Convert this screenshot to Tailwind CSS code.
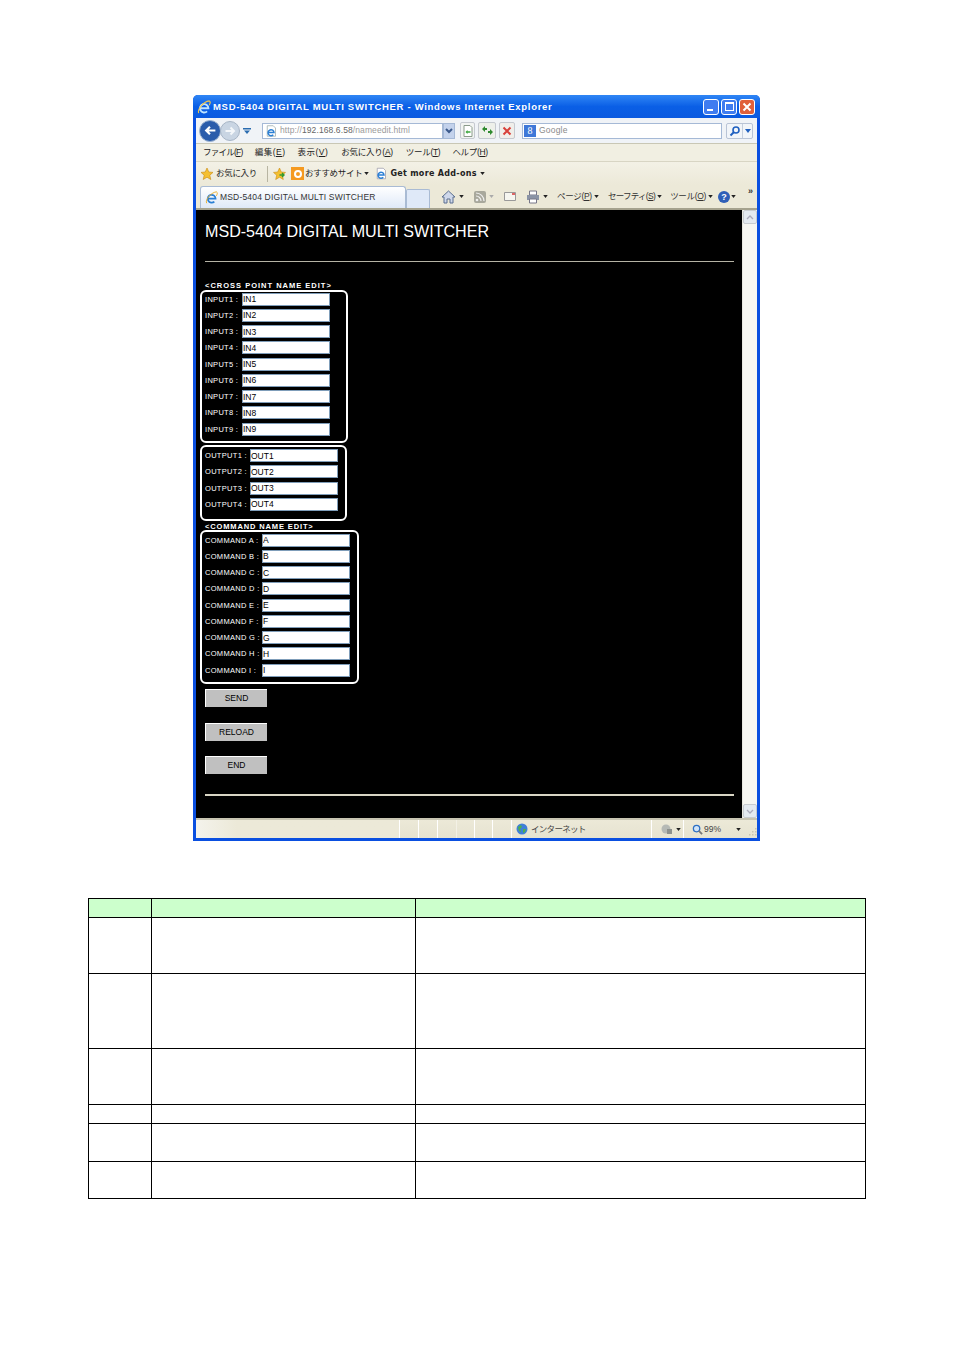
<!DOCTYPE html>
<html lang="en">

<head>
    <meta charset="UTF-8">
    <title>MSD-5404 DIGITAL MULTI SWITCHER</title>
    <script src="https://cdn.jsdelivr.net/npm/@tailwindcss/browser@4"></script>
</head>

<body class="bg-white font-['Liberation_Sans','Noto_Sans_CJK_JP',sans-serif]">
    <div class="w-[954px] h-[1350px] overflow-hidden pt-[95px]">

        <!-- IE window -->
        <div class="ml-[193px] w-[567px] h-[746px] flex flex-col bg-[#0a4fe0] rounded-t-[5px] px-[3px] pb-[3px]">

            <!-- Title bar -->
            <div class="h-[23px] -mx-[3px] px-[4px] flex items-center rounded-t-[5px] bg-gradient-to-b from-[#2f86f5] via-[#0a5fe6] to-[#0b5ae0]">
                <svg class="w-[14px] h-[14px]" viewBox="0 0 16 16"><path d="M4 9.500h9A4.800 4.800 0 1 0 11.500 13" fill="none" stroke="#bfe4ff" stroke-width="2.200"/><path d="M2 15C0 11 7 2 14 1c2 1 1 3 0 5" fill="none" stroke="#f3c74a" stroke-width="1.200"/></svg>
                <span class="ml-[2px] pt-[2px] text-[9.5px] font-bold tracking-[0.7px] text-white whitespace-nowrap">MSD-5404 DIGITAL MULTI SWITCHER - Windows Internet Explorer</span>
                <div class="ml-auto flex gap-[2px] pr-[1px]">
                    <div class="w-[16px] h-[16px] rounded-[3px] border border-white bg-[#3f7cf0] flex items-end pl-[3px] pb-[3px]"><div class="w-[6px] h-[2px] bg-white"></div></div>
                    <div class="w-[16px] h-[16px] rounded-[3px] border border-white bg-[#3f7cf0] flex items-center justify-center"><div class="w-[9px] h-[9px] border border-white border-t-2"></div></div>
                    <div class="w-[16px] h-[16px] rounded-[3px] border border-white bg-[#e0603a] flex items-center justify-center">
                        <svg class="w-[10px] h-[10px]" viewBox="0 0 10 10"><path d="M1.5 1.5l7 7M8.5 1.5l-7 7" stroke="#fff" stroke-width="2"/></svg>
                    </div>
                </div>
            </div>

            <!-- Address row -->
            <div class="h-[26px] flex items-center bg-[#f0f3f7] border-b border-[#c9c7b5] shrink-0 pl-[3px]">
                <div class="w-[22px] h-[22px] rounded-full bg-[#2a5cab] border border-[#9db3d0] flex items-center justify-center">
                    <svg class="w-[13px] h-[13px]" viewBox="0 0 12 12"><path d="M10.5 6H2M5.5 2.5L2 6l3.5 3.5" fill="none" stroke="#fff" stroke-width="2"/></svg>
                </div>
                <div class="-ml-[1px] w-[20px] h-[20px] rounded-full bg-[#c9d5e3] border border-[#a7b5c6] flex items-center justify-center">
                    <svg class="w-[12px] h-[12px]" viewBox="0 0 12 12"><path d="M1.5 6H10M6.5 2.5L10 6l-3.5 3.5" fill="none" stroke="#f4f7fa" stroke-width="2"/></svg>
                </div>
                <svg class="ml-[3px] w-[8px] h-[6px]" viewBox="0 0 8 6"><path d="M0 0h8v1.5H0zM1 2.5h6L4 6z" fill="#2a6cb0"/></svg>
                <div class="ml-[11px] w-[181px] h-[16px] bg-white border border-[#a5b9d6] flex items-center">
                    <svg class="w-[12px] h-[12px] ml-[2px] shrink-0" viewBox="0 0 16 16"><path d="M3 1h8l3 3v11H3z" fill="#fff" stroke="#9aa"/><path d="M4 10h8A4 4 0 1 0 11 13" fill="none" stroke="#2b7fd4" stroke-width="2"/></svg>
                    <span class="ml-[3px] text-[8.5px] text-[#9a9a9a] tracking-[0.1px] whitespace-nowrap">http://<span class="text-[#666]">192.168.6.58</span>/nameedit.html</span>
                </div>
                <div class="w-[12px] h-[16px] bg-[#c3d2ec] border border-[#a5b9d6] flex items-center justify-center">
                    <svg class="w-[8px] h-[6px]" viewBox="0 0 8 6"><path d="M1 1l3 3 3-3" fill="none" stroke="#3c5a8c" stroke-width="2"/></svg>
                </div>
                <div class="ml-[5px] w-[15px] h-[17px] border border-[#c5c9d0] rounded-[2px] bg-[#f2f4f2] flex items-center justify-center">
                    <svg class="w-[10px] h-[12px]" viewBox="0 0 10 12"><path d="M1 .5h6l2 2v9H1z" fill="#fff" stroke="#8a9a8a"/><path d="M2.5 7l2-2v1.2h3v1.600h-3V9z" fill="#3aa53a"/></svg>
                </div>
                <div class="ml-[3px] w-[18px] h-[17px] border border-[#c5c9d0] rounded-[2px] bg-[#eef0ea] flex items-center justify-center">
                    <svg class="w-[13px] h-[11px]" viewBox="0 0 13 11"><path d="M1 4l3-3v2h2v2H4v2zM12 7L9 10V8H7V6h2V4z" fill="#2f8a2f"/></svg>
                </div>
                <div class="ml-[3px] w-[16px] h-[17px] border border-[#c5c9d0] rounded-[2px] bg-[#f0eeea] flex items-center justify-center">
                    <svg class="w-[10px] h-[10px]" viewBox="0 0 10 10"><path d="M1.5 1.5l7 7M8.5 1.5l-7 7" stroke="#d8403a" stroke-width="2"/></svg>
                </div>
                <div class="ml-[7px] w-[200px] h-[16px] bg-white border border-[#a5b9d6] flex items-center">
                    <div class="ml-[1px] w-[12px] h-[12px] bg-[#3f78d8] text-white text-[10px] leading-[12px] text-center font-['Liberation_Serif']">8</div>
                    <span class="ml-[3px] text-[8.5px] text-[#8a8a8a] tracking-[0.2px]">Google</span>
                </div>
                <div class="ml-[4px] w-[27px] h-[16px] border border-[#b9c4d6] rounded-[2px] bg-[#f2f5f9] flex items-center">
                    <svg class="ml-[2px] w-[12px] h-[12px]" viewBox="0 0 12 12"><circle cx="7" cy="5" r="3" fill="none" stroke="#2060c0" stroke-width="1.6"/><path d="M5 7l-3.5 3.5" stroke="#2060c0" stroke-width="2"/></svg>
                    <div class="ml-[1px] h-full border-l border-[#c5cfdd]"></div>
                    <svg class="ml-[2px] w-[6px] h-[4px]" viewBox="0 0 6 4"><path d="M0 0h6L3 4z" fill="#2060c0"/></svg>
                </div>
            </div>

            <!-- Menu row -->
            <div class="h-[18px] flex items-center gap-[12px] pl-[7px] bg-[#f1efe2] border-b border-[#d8d5c4] text-[8.5px] text-[#222] whitespace-nowrap">
                <span class="tracking-[-0.75px]">ファイル(<u>F</u>)</span>
                <span class="tracking-[0.5px]">編集(<u>E</u>)</span>
                <span class="tracking-[0.5px]">表示(<u>V</u>)</span>
                <span class="ml-px tracking-[-0.3px]">お気に入り(<u>A</u>)</span>
                <span class="ml-px tracking-[-0.3px]">ツール(<u>T</u>)</span>
                <span class="tracking-[-0.3px]">ヘルプ(<u>H</u>)</span>
            </div>

            <!-- Links row -->
            <div class="h-[23px] flex items-center pl-[4px] bg-gradient-to-b from-[#f3f1e6] to-[#ece9d8] text-[8.5px] text-[#222] whitespace-nowrap">
                <svg class="w-[14px] h-[14px]" viewBox="0 0 14 14"><path d="M7 1l1.800 4 4.200.4-3.200 2.800 1 4.300L7 10.200l-3.800 2.300 1-4.300L1 5.400l4.200-.4z" fill="#f5c030" stroke="#c98a10" stroke-width=".6"/></svg>
                <span class="ml-[2px] tracking-[-0.3px]">お気に入り</span>
                <div class="ml-[10px] w-px h-[16px] bg-[#b8b5a2]"></div>
                <svg class="ml-[4px] w-[15px] h-[14px]" viewBox="0 0 14 14"><path d="M7 1l1.800 4 4.200.4-3.200 2.800 1 4.300L7 10.200l-3.800 2.300 1-4.300L1 5.400l4.200-.4z" fill="#f5c030" stroke="#c98a10" stroke-width=".6"/><path d="M7 8h4M9.500 6l2 2-2 2" stroke="#2f9a2f" stroke-width="1.400" fill="none"/></svg>
                <div class="ml-[4px] w-[13px] h-[13px] bg-[#f59a20] flex items-center justify-center">
                    <div class="w-[8px] h-[8px] rounded-full border-2 border-white"></div>
                </div>
                <span class="ml-[1px] tracking-[-0.3px]">おすすめサイト</span>
                <svg class="ml-[2px] w-[5px] h-[3px]" viewBox="0 0 6 4"><path d="M0 0h6L3 4z" fill="#222"/></svg>
                <svg class="ml-[6px] w-[12px] h-[13px]" viewBox="0 0 16 16"><path d="M3 1h8l3 3v11H3z" fill="#fff" stroke="#99a"/><path d="M4 10h8A4 4 0 1 0 11 13" fill="none" stroke="#2b7fd4" stroke-width="2"/></svg>
                <span class="ml-[3px] font-bold tracking-[0.3px] font-['DejaVu_Sans'] text-[8px]">Get more Add-ons</span>
                <svg class="ml-[3px] w-[5px] h-[3px]" viewBox="0 0 6 4"><path d="M0 0h6L3 4z" fill="#222"/></svg>
            </div>

            <!-- Tab row -->
            <div class="h-[25px] flex items-end pl-[4px] bg-[#ece9d8] border-b-2 border-[#a5a28e] text-[8.5px] text-[#333] whitespace-nowrap">
                <div class="w-[206px] h-[22px] flex items-center pl-[4px] bg-gradient-to-b from-white to-[#dfe9f8] border border-b-0 border-[#a9bbd4] rounded-t-[3px]">
                    <svg class="w-[13px] h-[13px]" viewBox="0 0 16 16"><path d="M4 9.500h9A4.800 4.800 0 1 0 11.500 13" fill="none" stroke="#2b7fd4" stroke-width="2.200"/><path d="M2 15C0 11 7 2 14 1c2 1 1 3 0 5" fill="none" stroke="#e8b030" stroke-width="1.200"/></svg>
                    <span class="ml-[2px] tracking-[0.18px]">MSD-5404 DIGITAL MULTI SWITCHER</span>
                </div>
                <div class="w-[24px] h-[19px] bg-[#dfe9f8] border border-b-0 border-[#a9bbd4] rounded-t-[2px]"></div>
                <div class="flex-1 h-full flex items-center pl-[11px]">
                    <svg class="w-[15px] h-[14px]" viewBox="0 0 15 14"><path d="M7.500 1L14 7h-2v6H9V9H6v4H3V7H1z" fill="#cfd8ea" stroke="#5a6f90"/></svg>
                    <svg class="ml-[3px] w-[5px] h-[3px]" viewBox="0 0 6 4"><path d="M0 0h6L3 4z" fill="#222"/></svg>
                    <svg class="ml-[10px] w-[12px] h-[12px]" viewBox="0 0 12 12"><rect width="12" height="12" rx="2" fill="#a8a89c"/><circle cx="3" cy="9" r="1.300" fill="#eee"/><path d="M2 5a5 5 0 0 1 5 5M2 2a8 8 0 0 1 8 8" fill="none" stroke="#eee" stroke-width="1.200"/></svg>
                    <svg class="ml-[3px] w-[5px] h-[3px]" viewBox="0 0 6 4"><path d="M0 0h6L3 4z" fill="#aaa"/></svg>
                    <svg class="ml-[10px] w-[12px] h-[9px]" viewBox="0 0 12 9"><path d="M.5.500h11v8H.5z" fill="#f6f6f0" stroke="#999"/><path d="M8 1h3v2H8z" fill="#d66"/></svg>
                    <svg class="ml-[10px] w-[14px] h-[14px]" viewBox="0 0 14 14"><path d="M3.500 1h7v4h-7z" fill="#fff" stroke="#778"/><path d="M1 5h12v5H1z" fill="#8a93a5"/><path d="M3.500 9h7v4h-7z" fill="#fff" stroke="#778"/></svg>
                    <svg class="ml-[3px] w-[5px] h-[3px]" viewBox="0 0 6 4"><path d="M0 0h6L3 4z" fill="#222"/></svg>
                    <span class="ml-[9px] tracking-[-0.3px]">ページ(<u>P</u>)</span>
                    <svg class="ml-[2px] w-[5px] h-[3px]" viewBox="0 0 6 4"><path d="M0 0h6L3 4z" fill="#222"/></svg>
                    <span class="ml-[9px] tracking-[-0.7px]">セーフティ(<u>S</u>)</span>
                    <svg class="ml-[2px] w-[5px] h-[3px]" viewBox="0 0 6 4"><path d="M0 0h6L3 4z" fill="#222"/></svg>
                    <span class="ml-[8px] tracking-[-0.3px]">ツール(<u>O</u>)</span>
                    <svg class="ml-[2px] w-[5px] h-[3px]" viewBox="0 0 6 4"><path d="M0 0h6L3 4z" fill="#222"/></svg>
                    <div class="ml-[5px] w-[12px] h-[12px] rounded-full bg-[#2f5fb8] text-white text-[9px] leading-[12px] text-center font-bold">?</div>
                    <svg class="ml-[1px] w-[5px] h-[3px]" viewBox="0 0 6 4"><path d="M0 0h6L3 4z" fill="#222"/></svg>
                    <span class="ml-[12px] -mt-[10px] font-bold text-[9px]">»</span>
                </div>
            </div>

            <!-- Page area -->
            <div class="flex h-[608px]">
                <div class="w-[546px] bg-black text-white pl-[9px] pr-[8px]">
                    <div class="pt-[11px] h-[40px] text-[16.1px] leading-[20px] whitespace-nowrap">MSD-5404 DIGITAL MULTI SWITCHER</div>
                    <div class="mt-[11px] h-px bg-[#b5b3a5]"></div>

                    <div class="mt-[19px] h-[8px] text-[7.5px] leading-[9px] font-bold tracking-[1px] whitespace-nowrap">&lt;CROSS POINT NAME EDIT&gt;</div>

                    <!-- Inputs -->
                    <div class="-ml-[5px] mt-px w-[148px] h-[153px] border-2 border-white rounded-[6px] pl-[3px] text-[7.5px] tracking-[0.3px]">
                        <div class="-mt-px h-[16.25px] flex items-center"><span class="w-[37px] shrink-0">INPUT1 :</span><input value="IN1" class="w-[88px] h-[13px] bg-white border border-[#7f9db9] text-black text-[8.5px] tracking-normal"></div>
                        <div class="h-[16.25px] flex items-center"><span class="w-[37px] shrink-0">INPUT2 :</span><input value="IN2" class="w-[88px] h-[13px] bg-white border border-[#7f9db9] text-black text-[8.5px] tracking-normal"></div>
                        <div class="h-[16.25px] flex items-center"><span class="w-[37px] shrink-0">INPUT3 :</span><input value="IN3" class="w-[88px] h-[13px] bg-white border border-[#7f9db9] text-black text-[8.5px] tracking-normal"></div>
                        <div class="h-[16.25px] flex items-center"><span class="w-[37px] shrink-0">INPUT4 :</span><input value="IN4" class="w-[88px] h-[13px] bg-white border border-[#7f9db9] text-black text-[8.5px] tracking-normal"></div>
                        <div class="h-[16.25px] flex items-center"><span class="w-[37px] shrink-0">INPUT5 :</span><input value="IN5" class="w-[88px] h-[13px] bg-white border border-[#7f9db9] text-black text-[8.5px] tracking-normal"></div>
                        <div class="h-[16.25px] flex items-center"><span class="w-[37px] shrink-0">INPUT6 :</span><input value="IN6" class="w-[88px] h-[13px] bg-white border border-[#7f9db9] text-black text-[8.5px] tracking-normal"></div>
                        <div class="h-[16.25px] flex items-center"><span class="w-[37px] shrink-0">INPUT7 :</span><input value="IN7" class="w-[88px] h-[13px] bg-white border border-[#7f9db9] text-black text-[8.5px] tracking-normal"></div>
                        <div class="h-[16.25px] flex items-center"><span class="w-[37px] shrink-0">INPUT8 :</span><input value="IN8" class="w-[88px] h-[13px] bg-white border border-[#7f9db9] text-black text-[8.5px] tracking-normal"></div>
                        <div class="h-[16.25px] flex items-center"><span class="w-[37px] shrink-0">INPUT9 :</span><input value="IN9" class="w-[88px] h-[13px] bg-white border border-[#7f9db9] text-black text-[8.5px] tracking-normal"></div>
                    </div>

                    <!-- Outputs -->
                    <div class="-ml-[5px] mt-[2px] w-[147px] h-[76px] border-2 border-white rounded-[6px] pl-[3px] pt-[0.5px] text-[7.5px] tracking-[0.3px]">
                        <div class="h-[16.25px] flex items-center"><span class="w-[45px] shrink-0">OUTPUT1 :</span><input value="OUT1" class="w-[88px] h-[13px] bg-white border border-[#7f9db9] text-black text-[8.5px] tracking-normal"></div>
                        <div class="h-[16.25px] flex items-center"><span class="w-[45px] shrink-0">OUTPUT2 :</span><input value="OUT2" class="w-[88px] h-[13px] bg-white border border-[#7f9db9] text-black text-[8.5px] tracking-normal"></div>
                        <div class="h-[16.25px] flex items-center"><span class="w-[45px] shrink-0">OUTPUT3 :</span><input value="OUT3" class="w-[88px] h-[13px] bg-white border border-[#7f9db9] text-black text-[8.5px] tracking-normal"></div>
                        <div class="h-[16.25px] flex items-center"><span class="w-[45px] shrink-0">OUTPUT4 :</span><input value="OUT4" class="w-[88px] h-[13px] bg-white border border-[#7f9db9] text-black text-[8.5px] tracking-normal"></div>
                    </div>

                    <div class="mt-px h-[8px] text-[7.5px] leading-[9px] font-bold tracking-[0.87px] whitespace-nowrap">&lt;COMMAND NAME EDIT&gt;</div>

                    <!-- Commands -->
                    <div class="-ml-[5px] w-[159px] h-[154px] border-2 border-white rounded-[6px] pl-[3px] text-[7.5px] tracking-[0.3px]">
                        <div class="h-[16.25px] flex items-center"><span class="w-[57px] shrink-0">COMMAND A :</span><input value="A" class="w-[88px] h-[13px] bg-white border border-[#7f9db9] text-black text-[8.5px] tracking-normal"></div>
                        <div class="h-[16.25px] flex items-center"><span class="w-[57px] shrink-0">COMMAND B :</span><input value="B" class="w-[88px] h-[13px] bg-white border border-[#7f9db9] text-black text-[8.5px] tracking-normal"></div>
                        <div class="h-[16.25px] flex items-center"><span class="w-[57px] shrink-0">COMMAND C :</span><input value="C" class="w-[88px] h-[13px] bg-white border border-[#7f9db9] text-black text-[8.5px] tracking-normal"></div>
                        <div class="h-[16.25px] flex items-center"><span class="w-[57px] shrink-0">COMMAND D :</span><input value="D" class="w-[88px] h-[13px] bg-white border border-[#7f9db9] text-black text-[8.5px] tracking-normal"></div>
                        <div class="h-[16.25px] flex items-center"><span class="w-[57px] shrink-0">COMMAND E :</span><input value="E" class="w-[88px] h-[13px] bg-white border border-[#7f9db9] text-black text-[8.5px] tracking-normal"></div>
                        <div class="h-[16.25px] flex items-center"><span class="w-[57px] shrink-0">COMMAND F :</span><input value="F" class="w-[88px] h-[13px] bg-white border border-[#7f9db9] text-black text-[8.5px] tracking-normal"></div>
                        <div class="h-[16.25px] flex items-center"><span class="w-[57px] shrink-0">COMMAND G :</span><input value="G" class="w-[88px] h-[13px] bg-white border border-[#7f9db9] text-black text-[8.5px] tracking-normal"></div>
                        <div class="h-[16.25px] flex items-center"><span class="w-[57px] shrink-0">COMMAND H :</span><input value="H" class="w-[88px] h-[13px] bg-white border border-[#7f9db9] text-black text-[8.5px] tracking-normal"></div>
                        <div class="h-[16.25px] flex items-center"><span class="w-[57px] shrink-0">COMMAND I :</span><input value="I" class="w-[88px] h-[13px] bg-white border border-[#7f9db9] text-black text-[8.5px] tracking-normal"></div>
                    </div>

                    <!-- Buttons -->
                    <div class="mt-[5px] flex flex-col gap-[15.5px]">
                        <button class="w-[62px] h-[18px] bg-[#c0c0c0] border-t border-l border-white text-black text-[8.5px]">SEND</button>
                        <button class="w-[62px] h-[18px] bg-[#c0c0c0] border-t border-l border-white text-black text-[8.5px]">RELOAD</button>
                        <button class="w-[62px] h-[18px] bg-[#c0c0c0] border-t border-l border-white text-black text-[8.5px]">END</button>
                    </div>

                    <div class="mt-[20px] h-[2px] bg-[#d8d5c4]"></div>
                </div>

                <!-- Scrollbar -->
                <div class="w-[15px] flex flex-col bg-[#f7f7f2] border-l border-[#e8e8e0]">
                    <div class="h-[14px] bg-[#e4eaf0] border border-[#c8ccd0] rounded-[2px] flex items-center justify-center">
                        <svg class="w-[8px] h-[5px]" viewBox="0 0 8 5"><path d="M1 4l3-3 3 3" fill="none" stroke="#aab" stroke-width="1.3"/></svg>
                    </div>
                    <div class="mt-auto h-[14px] bg-[#e4eaf0] border border-[#c8ccd0] rounded-[2px] flex items-center justify-center">
                        <svg class="w-[8px] h-[5px]" viewBox="0 0 8 5"><path d="M1 1l3 3 3-3" fill="none" stroke="#aab" stroke-width="1.3"/></svg>
                    </div>
                </div>
            </div>

            <!-- Status bar -->
            <div class="flex-1 flex items-center bg-gradient-to-b from-[#ece9d8] to-[#e6e3d0] border-t-2 border-[#c8c5b2] text-[8.5px] text-[#444] whitespace-nowrap">
                <div class="w-[204px] h-full border-r border-white bg-gradient-to-r from-[#f4f3ec] to-[#ece9d8] to-[20%]"></div>
                <div class="w-[19px] h-full border-r border-white"></div>
                <div class="w-[19px] h-full border-r border-white"></div>
                <div class="w-[19px] h-full border-r border-[#f3f1e6]"></div>
                <div class="w-[18px] h-full border-r border-white"></div>
                <div class="w-[18px] h-full border-r border-white"></div>
                <div class="w-[19px] h-full border-r border-white"></div>
                <div class="w-[140px] h-full border-r border-white flex items-center pl-[4px]">
                    <svg class="w-[12px] h-[12px]" viewBox="0 0 12 12"><circle cx="6" cy="6" r="5.5" fill="#3f7fd8"/><path d="M2 4l3-2 1 2-2 2 1 3-2-1zM7 6l3 0-1 3-2 1z" fill="#4caf50"/></svg>
                    <span class="ml-[3px] tracking-[-0.7px]">インターネット</span>
                </div>
                <div class="w-[32px] h-full border-r border-white flex items-center pl-[9px]">
                    <svg class="w-[12px] h-[12px]" viewBox="0 0 12 12"><circle cx="5" cy="6" r="4.500" fill="#b5b9b5"/><path d="M6 6h5v5H6z" fill="#8d918d"/></svg>
                    <svg class="ml-[3px] w-[5px] h-[3px]" viewBox="0 0 6 4"><path d="M0 0h6L3 4z" fill="#222"/></svg>
                </div>
                <div class="flex-1 flex items-center pl-[8px]">
                    <svg class="w-[11px] h-[11px]" viewBox="0 0 12 12"><circle cx="5" cy="5" r="3.5" fill="#cfe3f8" stroke="#2b6fc4" stroke-width="1.4"/><path d="M7.500 7.500L11 11" stroke="#777" stroke-width="2"/></svg>
                    <span class="ml-[1px]">99%</span>
                    <svg class="ml-[15px] w-[5px] h-[3px]" viewBox="0 0 6 4"><path d="M0 0h6L3 4z" fill="#222"/></svg>
                    <svg class="ml-auto mt-[5px] w-[10px] h-[10px]" viewBox="0 0 10 10"><path d="M8 1h1.500v1.500H8zM5 4h1.500v1.500H5zM8 4h1.500v1.500H8zM2 7h1.500v1.500H2zM5 7h1.500v1.500H5zM8 7h1.500v1.500H8z" fill="#c8c5b2"/></svg>
                </div>
            </div>
        </div>

        <!-- Description table (cells are blank in the reference) -->
        <table class="mt-[57px] ml-[88px] w-[778px] table-fixed border-collapse">
            <colgroup>
                <col class="w-[63px]">
                <col class="w-[264px]">
                <col>
            </colgroup>
            <tbody>
                <tr class="h-[19px] bg-[#ccffcc]"><td class="border border-black"></td><td class="border border-black"></td><td class="border border-black"></td></tr>
                <tr class="h-[56px]"><td class="border border-black"></td><td class="border border-black"></td><td class="border border-black"></td></tr>
                <tr class="h-[75px]"><td class="border border-black"></td><td class="border border-black"></td><td class="border border-black"></td></tr>
                <tr class="h-[56px]"><td class="border border-black"></td><td class="border border-black"></td><td class="border border-black"></td></tr>
                <tr class="h-[19px]"><td class="border border-black"></td><td class="border border-black"></td><td class="border border-black"></td></tr>
                <tr class="h-[38px]"><td class="border border-black"></td><td class="border border-black"></td><td class="border border-black"></td></tr>
                <tr class="h-[37px]"><td class="border border-black"></td><td class="border border-black"></td><td class="border border-black"></td></tr>
            </tbody>
        </table>
    </div>
</body>

</html>
